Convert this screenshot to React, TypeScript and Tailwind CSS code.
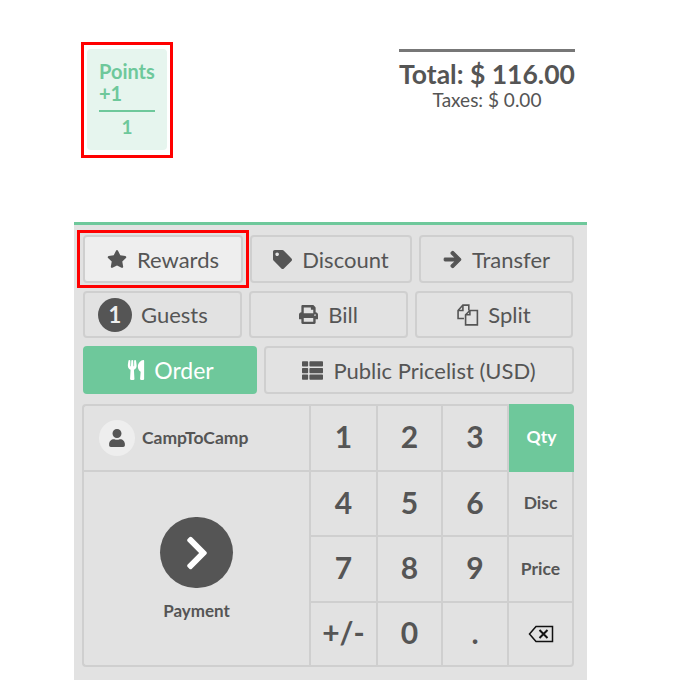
import type { ReactNode } from "react"
import {
  FaArrowRight,
  FaChevronRight,
  FaPrint,
  FaStar,
  FaTag,
  FaThList,
  FaUser,
  FaUtensils,
} from "react-icons/fa"

function ControlButton({
  className,
  children,
}: {
  className: string
  children: ReactNode
}) {
  return (
    <button
      className={`relative flex shrink-0 items-center justify-center gap-[10px] rounded border-2 border-[#cfcfcf] text-[22px] text-[#555555] ${className}`}
    >
      {children}
    </button>
  )
}

function SplitIcon() {
  return (
    <svg width="22" height="22" viewBox="1 1 20.5 20.5" fill="none" stroke="#555555" strokeWidth="1.5">
      <path d="M7.5 14.5H2V7l4.5-5H12v5" />
      <path d="M6.5 2v5H2" />
      <path d="M9 20.5V11l4-4h7v13.5z" />
      <path d="M13 7v4H9" />
    </svg>
  )
}

function BackspaceIcon() {
  return (
    <svg width="26" height="18" viewBox="0 0 26 18" fill="none" stroke="#111111" strokeWidth="1.5">
      <path d="M8 1.5h16.5v15H8L1.5 9z" />
      <path d="M11.5 5l8 8M19.5 5l-8 8" strokeWidth="2" />
    </svg>
  )
}

const keys = [
  { label: "1" },
  { label: "2" },
  { label: "3" },
  { label: "Qty", mode: true, active: true },
  { label: "4" },
  { label: "5" },
  { label: "6" },
  { label: "Disc", mode: true },
  { label: "7" },
  { label: "8" },
  { label: "9" },
  { label: "Price", mode: true },
  { label: "+/-" },
  { label: "0" },
  { label: "." },
  { label: "back", mode: true },
]

export default function App() {
  return (
    <div className="h-[690px] w-[690px] overflow-hidden bg-white font-['Lato','Noto_Sans',sans-serif] text-[#555555]">
      {/* Order summary */}
      <div className="flex h-[222px] items-start pt-[42px] pl-[81px]">
        <div className="h-[116px] w-[92px] shrink-0 border-[3px] border-[#ff0000] px-[3px] pt-1 pb-[5px]">
          <div className="h-[101px] rounded bg-[#e6f5ee] px-3 pt-[11px] text-[#6ec89b]">
            <div className="text-[20px] leading-[22px] font-bold">Points</div>
            <div className="text-[20px] leading-[22px] font-bold">+1</div>
            <div className="mt-[6px] border-t-2 border-[#6ec89b] pt-[4px] text-center text-[19px] leading-[22px] font-bold">
              1
            </div>
          </div>
        </div>
        <div className="mt-[7px] ml-[226px] flex w-[176px] shrink-0 flex-col items-center border-t-[3px] border-[#777777]">
          <div className="mt-[7px] text-[26.5px] leading-[30px] font-bold whitespace-nowrap">
            Total: $ 116.00
          </div>
          <div className="mt-px text-[19px] leading-[20px] whitespace-nowrap">Taxes: $ 0.00</div>
        </div>
      </div>

      {/* Control panel */}
      <div className="ml-[74px] h-[458px] w-[513px] border-t-[3px] border-[#6ec89b] bg-[#e2e2e2] pt-[10px] pl-[9px]">
        <div className="flex gap-[7px]">
          <ControlButton className="h-[48px] w-[160px] bg-[#eeeeee]">
            <FaStar size={20} />
            Rewards
            <span className="absolute -inset-x-[8px] -inset-y-[7px] border-[3px] border-[#ff0000]" />
          </ControlButton>
          <ControlButton className="h-[48px] w-[162px]">
            <FaTag size={19} />
            Discount
          </ControlButton>
          <ControlButton className="h-[48px] w-[155px]">
            <FaArrowRight size={19} stroke="currentColor" strokeWidth={30} />
            Transfer
          </ControlButton>
        </div>
        <div className="mt-2 flex gap-[7px]">
          <ControlButton className="h-[47px] w-[159px] !justify-start !gap-[9px] pl-[13px]">
            <span className="flex h-[34px] w-[34px] items-center justify-center rounded-full bg-[#555555] text-[22px] font-bold text-[#eeeeee]">
              1
            </span>
            Guests
          </ControlButton>
          <ControlButton className="h-[47px] w-[159px]">
            <FaPrint size={19} />
            Bill
          </ControlButton>
          <ControlButton className="h-[47px] w-[158px] !gap-[9px]">
            <SplitIcon />
            Split
          </ControlButton>
        </div>
        <div className="mt-2 flex gap-[7px]">
          <ControlButton className="h-[48px] w-[174px] !gap-2 !border-[#6ec89b] bg-[#6ec89b] !text-white">
            <FaUtensils size={20} />
            <span className="text-[23px]">Order</span>
          </ControlButton>
          <ControlButton className="h-[48px] w-[310px]">
            <FaThList size={21} />
            Public Pricelist (USD)
          </ControlButton>
        </div>

        {/* Actions and numpad */}
        <div className="mt-[10px] -ml-px flex h-[263px] w-[492px]">
          <div className="flex w-[227px] shrink-0 flex-col rounded-l border-2 border-r-0 border-[#cfcfcf]">
            <div className="flex h-[66px] shrink-0 items-center gap-[7px] border-b-2 border-[#cfcfcf] pl-[15px]">
              <span className="flex h-[36px] w-[36px] items-center justify-center rounded-full bg-[#eeeeee]">
                <FaUser size={18} />
              </span>
              <span className="text-[17.5px] font-bold">CampToCamp</span>
            </div>
            <div className="flex flex-1 flex-col items-center pt-[45px]">
              <span className="flex h-[71px] w-[73px] items-center justify-center rounded-full bg-[#555555] text-white">
                <FaChevronRight size={38} />
              </span>
              <span className="mt-[10px] text-[17px] font-bold">Payment</span>
            </div>
          </div>
          <div className="grid w-[265px] grid-cols-[67px_65px_66px_63px] grid-rows-[66px_65px_66px_62px] rounded-r border-2 border-[#cfcfcf]">
            {keys.map((key, i) => (
              <div
                key={key.label}
                className={`flex items-center justify-center text-[#555555] ${i % 4 !== 3 ? "border-r-2" : ""} ${i < 12 ? "border-b-2" : ""} border-[#cfcfcf] ${key.mode ? "text-[17.5px] font-bold" : "pb-[3px] text-[30px] font-bold"} ${key.active ? "-mt-[2px] -mr-[2px] rounded-tr !border-[#6ec89b] bg-[#6ec89b] !text-white" : ""}`}
              >
                {key.label === "back" ? <BackspaceIcon /> : key.label}
              </div>
            ))}
          </div>
        </div>
      </div>
    </div>
  )
}
